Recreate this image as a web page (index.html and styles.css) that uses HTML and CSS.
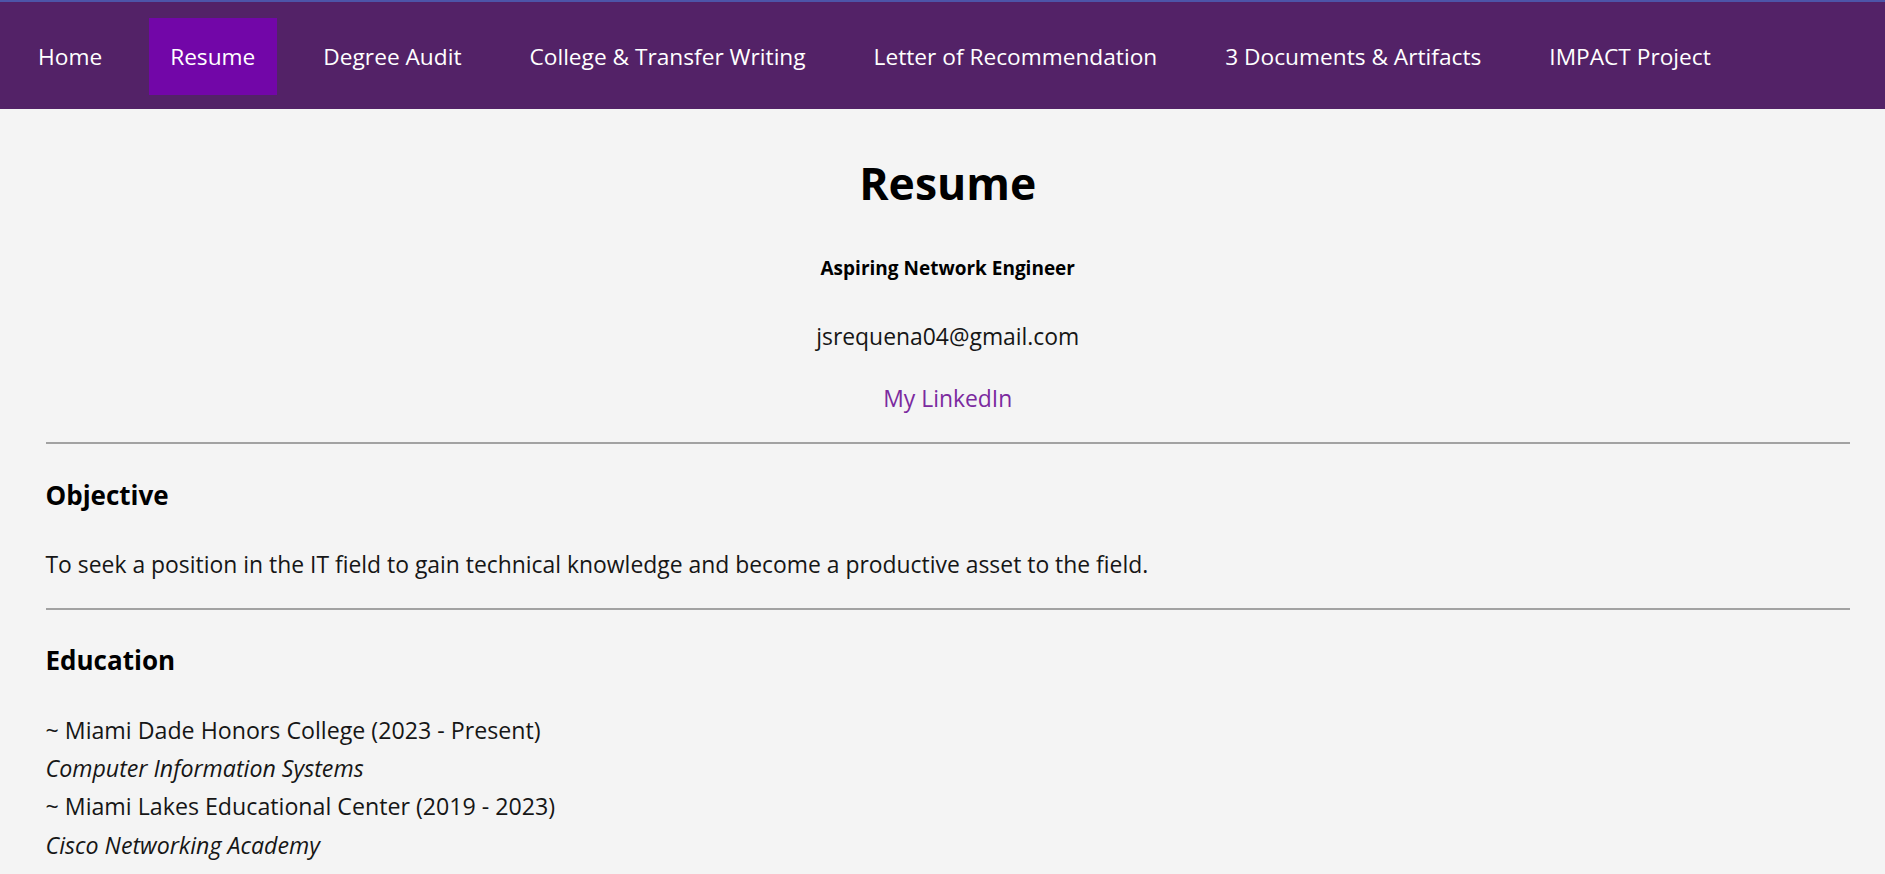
FILE: index.html
```html
<!DOCTYPE html>
<html lang="en">
<head>
<meta charset="utf-8">
<title>Resume</title>
<link rel="stylesheet" href="styles.css">
</head>
<body>
<nav class="topnav">
  <a class="nav-link" href="#">Home</a>
  <a class="nav-link active" href="#">Resume</a>
  <a class="nav-link" href="#">Degree Audit</a>
  <a class="nav-link" href="#">College &amp; Transfer Writing</a>
  <a class="nav-link" href="#">Letter of Recommendation</a>
  <a class="nav-link" href="#">3 Documents &amp; Artifacts</a>
  <a class="nav-link" href="#">IMPACT Project</a>
</nav>
<main class="page">
  <header class="intro">
    <h1 class="title">Resume</h1>
    <h5 class="subtitle">Aspiring Network Engineer</h5>
    <p class="contact email">jsrequena04@gmail.com</p>
    <p class="contact"><a class="linkedin" href="#">My LinkedIn</a></p>
  </header>
  <hr class="rule">
  <section class="block">
    <h3 class="block-title">Objective</h3>
    <p class="text">To seek a position in the IT field to gain technical knowledge and become a productive asset to the field.</p>
  </section>
  <hr class="rule">
  <section class="block">
    <h3 class="block-title">Education</h3>
    <div class="lines">
      <div class="line">~ Miami Dade Honors College (2023 - Present)</div>
      <div class="line italic">Computer Information Systems</div>
      <div class="line">~ Miami Lakes Educational Center (2019 - 2023)</div>
      <div class="line italic">Cisco Networking Academy</div>
    </div>
  </section>
</main>
</body>
</html>
```

FILE: styles.css
```css
html, body {
  margin: 0;
  padding: 0;
}
body {
  background: #f4f4f4;
  font-family: "Open Sans", "Noto Sans", sans-serif;
  color: #161616;
}
.topnav {
  display: flex;
  align-items: center;
  gap: 25px;
  height: 107px;
  box-sizing: content-box;
  border-top: 2px solid #4d55a8;
  background: #532267;
  padding: 0 0 0 16.5px;
}
.nav-link {
  display: flex;
  align-items: center;
  height: 77px;
  margin-top: 2px;
  padding: 0 21.5px;
  color: #ffffff;
  text-decoration: none;
  font-size: 22.7px;
  white-space: nowrap;
}
.nav-link.active {
  background: #7206a8;
}
.page {
  padding: 0 35px 0 45.5px;
}
.intro {
  text-align: center;
}
.title {
  margin: 45px 0 0;
  font-size: 44.5px;
  line-height: 57.6px;
  font-weight: 700;
  color: #000;
}
.subtitle {
  margin: 44px 0 0;
  font-size: 19px;
  line-height: 24px;
  font-weight: 700;
  color: #000;
}
.contact {
  margin: 0;
  font-size: 22.9px;
  line-height: 38.4px;
}
.email {
  margin-top: 38.8px;
}
.contact + .contact {
  margin-top: 23.6px;
}
.linkedin {
  color: #7b2a9f;
  text-decoration: none;
}
.rule {
  margin: 23.3px 0 0;
  border: 0;
  border-top: 2px solid #a2a2a2;
  height: 0;
}
.block-title {
  margin: 35.5px 0 0;
  font-size: 26px;
  line-height: 33.6px;
  font-weight: 700;
  color: #000;
}
.text {
  margin: 34px 0 0;
  font-size: 22.9px;
  line-height: 38.4px;
}
.rule + .block .block-title {
  margin-top: 34.5px;
}
.lines {
  margin-top: 33px;
}
.line {
  font-size: 23.2px;
  line-height: 38.2px;
}
.italic {
  font-style: italic;
}
```
